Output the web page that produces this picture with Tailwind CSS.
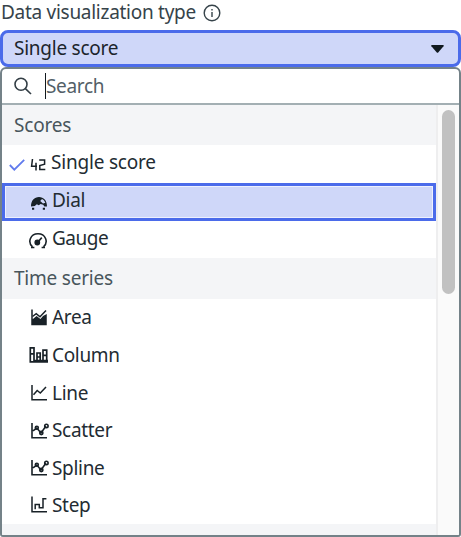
<!DOCTYPE html>
<html lang="en">
<head>
<meta charset="utf-8">
<title>Data visualization type</title>
<script src="https://cdn.jsdelivr.net/npm/@tailwindcss/browser@4"></script>
</head>
<body class="w-[461px] h-[537px] overflow-hidden bg-white font-['Noto_Sans','Open_Sans',sans-serif] text-[19px] leading-[26px] text-[#232c33] tracking-[-0.32px]">
<div class="flex h-[30px] items-start pl-[1px] gap-[7px]">
  <span class="-mt-[1px] whitespace-nowrap text-[#36434a] tracking-[-0.28px]">Data visualization type</span>
  <svg class="mt-[4px] size-[18px]" viewBox="0 0 18 18" fill="none" stroke="#36434a" stroke-width="1.4"><circle cx="9" cy="9" r="7.8"/><path d="M9 8v5M9 5v1.6"/></svg>
</div>
<div class="flex h-[37px] items-center justify-between rounded-[8px] border-[3px] border-[#4b6bea] bg-[#cfd7f9] pl-[11px] pr-[14px]">
  <span class="-mt-[2px] text-[#1c252c] tracking-[-0.25px]">Single score</span>
  <svg class="mt-[1px] h-[8px] w-[13px]" viewBox="0 0 13 8"><path d="M.8 0h11.4q1 .2.3 1.2L7.2 7.5q-.7.7-1.4 0L.4 1.2Q-.2.2.8 0z" fill="#111a20"/></svg>
</div>
<div class="flex h-[470px] flex-col overflow-hidden rounded-t-[6px] rounded-b-[3px] border-2 border-[#748288]">
  <div class="flex h-[36px] shrink-0 items-center border-b-2 border-[#a3afb3] pl-[12px]">
    <svg class="size-[18px]" viewBox="0 0 18 18" fill="none" stroke="#333e45" stroke-width="1.6"><circle cx="7" cy="7.2" r="6"/><path d="M11.4 11.6 17 17"/></svg>
    <span class="ml-[13px] h-[26px] w-px bg-[#111a20]"></span>
    <span class="text-[#536067]">Search</span>
  </div>
  <div class="flex min-h-0 flex-1">
    <div class="w-[434px] shrink-0 overflow-hidden">
      <div class="flex h-[40px] items-center bg-[#f4f5f7] pb-[1px] pl-[12px] text-[#48555c] tracking-[-0.2px]">Scores</div>
      <div class="flex h-[38px] items-center pb-[4px] pl-[7px]">
        <svg class="mt-[5px] h-[12px] w-[16px]" viewBox="0 0 16 12" fill="none" stroke="#617bed" stroke-width="1.8"><path d="M.8 6 5.3 10.6 15.2.8"/></svg>
        <svg class="ml-[5px] mt-[5px] h-[12px] w-[18px]" viewBox="0 0 18 12" fill="none" stroke="#182127" stroke-width="1.5"><path d="M2.5 0 1.6 7.2H7M6 3.8v7.7M9.2 1H14.6V5.2L9.8 6.6V10.6H15.3"/></svg>
        <span class="ml-[3px] tracking-[-0.2px]">Single score</span>
      </div>
      <div class="flex h-[38px] items-center border-[3px] border-[#4b6bea] bg-[#cfd7f9] pb-[4px] pl-[25px] shadow-[inset_0_0_0_1px_#edf0fe]">
        <svg class="mt-[5px] h-[14px] w-[18px]" viewBox="0 0 18 14"><path d="M1 10.5C1 4.5 4.4 1 9 1s8 3.5 8 9.5h-2.6l-1.2-1.8-2.6-.8-1.8 1.4-2-1-2 1.7z" fill="#182127"/><path d="M10.2 5 12 3q2 .6 3.4 3.8L13 7.4z" fill="#cfd7f9"/><path d="M2 11.7h2.2v2H2zM12.8 11.7h2.2v2h-2.2z" fill="#182127"/></svg>
        <span class="ml-[4px]">Dial</span>
      </div>
      <div class="flex h-[37px] items-center pb-[3px] pl-[26px]">
        <svg class="mt-[5px] h-[17px] w-[20px]" viewBox="0 0 20 17" fill="none" stroke="#182127" stroke-width="1.6"><path d="M4.5 14.8C-.8 10 2.5 1.8 10 1.8s10.8 8.2 5.5 13"/><path d="M9 11 13.8 5.6"/><circle cx="9.3" cy="10.5" r="2.1" fill="#182127"/><path d="M3 15.5h3.4M13.6 15.5H17"/></svg>
        <span class="ml-[4px] tracking-[-0.5px]">Gauge</span>
      </div>
      <div class="flex h-[41px] items-center bg-[#f4f5f7] pb-[1px] pl-[12px] text-[#48555c] tracking-[-0.22px]">Time series</div>
      <div class="flex h-[37px] items-center pb-[2px] pl-[29px]">
        <svg class="mt-[1px] h-[17px] w-[16px]" viewBox="0 0 16 17" fill="none" stroke="#182127" stroke-width="1.5"><path d="M1 .5v15h14V6.2l-2.5 1.5L9.6 11 5.6 8 3 10 1 12z" fill="#182127"/><path d="M1.5 7.5 5.2 4.6 9 7.8 15 1.5"/></svg>
        <span class="ml-[5px]">Area</span>
      </div>
      <div class="flex h-[38px] items-center pl-[27px]">
        <svg class="-mt-[1px] h-[17px] w-[20px]" viewBox="0 0 20 17" fill="none" stroke="#182127" stroke-width="1.7"><path d="M1.3 1v14.8H19M1.3 1.8H5V15M1.3 7.8H5M8 15V7h3.2v8M8 11h3.2M14 15V4.2h3.7V15M14 9.4h3.7M5 14.5h14"/></svg>
        <span class="ml-[3px]">Column</span>
      </div>
      <div class="flex h-[37px] items-center pl-[29px]">
        <svg class="h-[17px] w-[16px]" viewBox="0 0 16 17" fill="none" stroke="#182127" stroke-width="1.5"><path d="M1 1v14.8h15M2.5 10.8 6.2 6.5 9.3 9 15 3"/></svg>
        <span class="ml-[5px]">Line</span>
      </div>
      <div class="flex h-[38px] items-center pl-[29px]">
        <svg class="h-[17px] w-[18px]" viewBox="0 0 18 17" fill="none" stroke="#182127" stroke-width="1.6"><path d="M1 1v14.8h15M2 8.8 5.8 6 10 11l5-7"/><circle cx="5.8" cy="5.8" r="1.5"/><circle cx="10.3" cy="11" r="1.6"/><circle cx="15.4" cy="4" r="1.7"/></svg>
        <span class="ml-[3px]">Scatter</span>
      </div>
      <div class="flex h-[37px] items-center pl-[29px]">
        <svg class="h-[17px] w-[18px]" viewBox="0 0 18 17" fill="none" stroke="#182127" stroke-width="1.6"><path d="M1 1v14.8h15M2 8.8 5.8 6 10 11l5-7"/><circle cx="5.8" cy="5.8" r="1.5"/><circle cx="10.3" cy="11" r="1.6"/><circle cx="15.4" cy="4" r="1.7"/></svg>
        <span class="ml-[3px]">Spline</span>
      </div>
      <div class="flex h-[38px] items-center pb-[1px] pl-[29px]">
        <svg class="h-[17px] w-[16px]" viewBox="0 0 16 17" fill="none" stroke="#182127" stroke-width="1.5"><path d="M1 .5v15.2h15M4.2 13.2V8.6H8.3v3.2h3.7V2.8H15.4"/></svg>
        <span class="ml-[5px]">Step</span>
      </div>
      <div class="h-[11px] bg-[#f4f5f7]"></div>
    </div>
    <div class="flex flex-1 justify-center border-l-2 border-[#eeeeef] bg-[#fafafa] pt-[5px]">
      <div class="h-[184px] w-[13px] rounded-full bg-[#c1c1c1]"></div>
    </div>
  </div>
</div>
</body>
</html>
